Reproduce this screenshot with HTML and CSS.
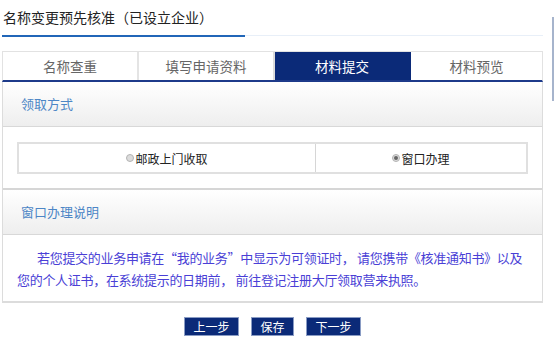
FILE: index.html
```html
<!DOCTYPE html>
<html lang="zh-CN">
<head>
<meta charset="utf-8">
<title>名称变更预先核准</title>
<link rel="stylesheet" href="styles.css">
</head>
<body>
<div class="page">
  <div class="title">名称变更预先核准（已设立企业）</div>
  <div class="title-line"><span class="title-line-main"></span><span class="title-line-rest"></span></div>
  <div class="tabs">
    <div class="tab">名称查重</div>
    <div class="tab">填写申请资料</div>
    <div class="tab active">材料提交</div>
    <div class="tab">材料预览</div>
  </div>
  <div class="panel">
    <div class="sec-head">领取方式</div>
    <div class="sec-body options-wrap">
      <div class="options">
        <div class="option"><span class="radio"></span>邮政上门收取</div>
        <div class="option"><span class="radio checked"></span>窗口办理</div>
      </div>
    </div>
    <div class="sec-head sec-head-2">窗口办理说明</div>
    <div class="sec-body desc-wrap">
      <p class="desc">若您提交的业务申请在“我的业务”中显示为可领证时， 请您携带《核准通知书》以及您的个人证书，在系统提示的日期前， 前往登记注册大厅领取营来执照。</p>
    </div>
  </div>
  <div class="actions">
    <button class="btn btn-wide">上一步</button>
    <button class="btn">保存</button>
    <button class="btn btn-wide">下一步</button>
  </div>
</div>
<div class="scroll-thumb"></div>
</body>
</html>
```
FILE: styles.css
```css
html, body {
  margin: 0;
  padding: 0;
  background: #fff;
}
body {
  font-family: "Noto Sans CJK SC", "Noto Sans", sans-serif;
  color: #222;
  width: 554px;
  height: 344px;
  overflow: hidden;
}
.page {
  width: 541px;
  margin-left: 2px;
}
.title {
  height: 35px;
  line-height: 34px;
  font-size: 14px;
  color: #222;
  padding-left: 1px;
}
.title-line {
  display: flex;
  align-items: flex-start;
  height: 2px;
}
.title-line-main {
  width: 243px;
  height: 2px;
  background: #2166b8;
}
.title-line-rest {
  flex: 1;
  height: 1px;
  background: #e8eff8;
}
.tabs {
  display: flex;
  margin-top: 14px;
  border-top: 1px solid #e2e2e2;
  border-left: 1px solid #e2e2e2;
  border-right: 1px solid #e2e2e2;
  border-bottom: 2px solid #1d3a8a;
}
.tab {
  width: 134px;
  height: 28px;
  line-height: 28px;
  text-align: center;
  font-size: 13.5px;
  color: #666;
  border-right: 2px solid #e4e4e4;
}
.tab:first-child { width: 134px; }
.tab:last-child { border-right: none; flex: 1; }
.tab.active {
  background: #0b2a78;
  color: #fff;
  border-right-color: #0b2a78;
}
.tab:nth-child(2) { border-right-color: #dcdcdc; }
.panel {
  border-left: 1px solid #dcdcdc;
  border-right: 1px solid #dcdcdc;
  border-bottom: 2px solid #dcdcdc;
}
.sec-head {
  height: 44px;
  line-height: 44px;
  padding-left: 18px;
  font-size: 13px;
  color: #4d86c6;
  background: linear-gradient(#ffffff, #eeeeee);
  border-bottom: 1px solid #d8d8d8;
}
.sec-head-2 {
  border-top: 2px solid #d6d6d6;
}
.options-wrap {
  padding: 15px 14px 14px 14px;
}
.options {
  display: flex;
  border: 2px solid #e0e0e0;
  height: 28px;
}
.option {
  display: flex;
  align-items: center;
  justify-content: center;
  font-size: 12px;
  color: #222;
}
.option:first-child {
  width: 296px;
  border-right: 1px solid #d6d6d6;
}
.option:last-child {
  flex: 1;
}
.radio {
  width: 6px;
  height: 6px;
  border-radius: 50%;
  border: 1px solid #b4b4b4;
  background: #dcdcdc;
  margin-right: 1px;
  display: inline-flex;
  align-items: center;
  justify-content: center;
}
.radio.checked::after {
  content: "";
  width: 4px;
  height: 4px;
  border-radius: 50%;
  background: #666;
}
.desc-wrap {
  padding: 12px 14px 10px 14px;
}
.desc {
  margin: 0;
  font-size: 13px;
  letter-spacing: -0.3px;
  line-height: 22px;
  text-indent: 20px;
  color: #4a3fd6;
}
.actions {
  display: flex;
  justify-content: center;
  gap: 12px;
  margin-top: 14px;
}
.btn {
  height: 19px;
  padding: 0;
  border: 1px solid #8a9cc4;
  background: #0b2a78;
  color: #fff;
  font-family: "Noto Sans CJK SC", sans-serif;
  font-size: 12px;
  line-height: 17px;
  width: 43px;
}
.btn-wide {
  width: 55px;
}
.scroll-thumb {
  position: fixed;
  left: 552px;
  top: 17px;
  width: 3px;
  height: 84px;
  background: #a6b4cc;
}
```
